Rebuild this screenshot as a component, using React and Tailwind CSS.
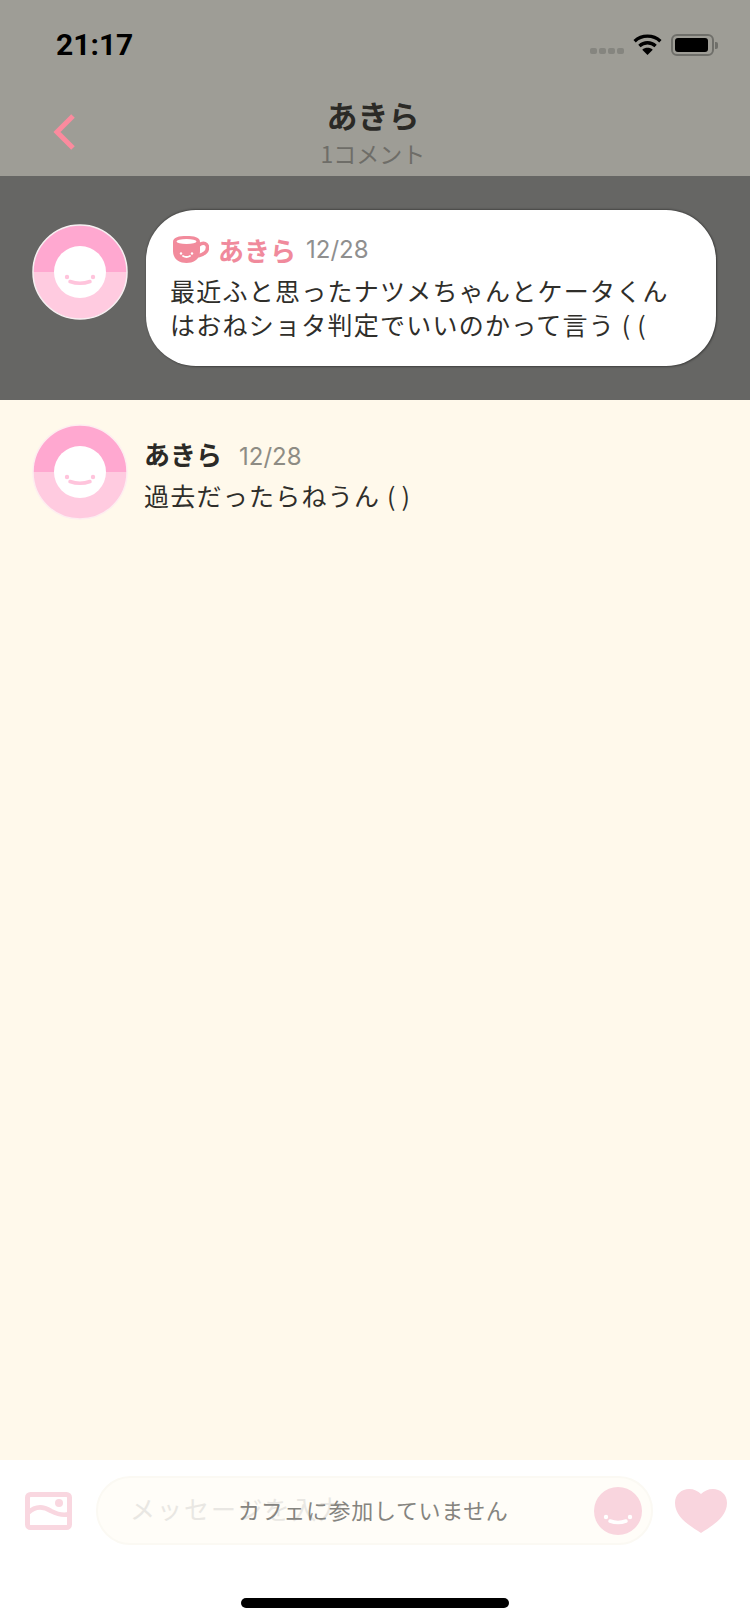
import React from 'react';

const fontStack = "[font-family:'Noto_Sans_CJK_JP','Noto_Sans',sans-serif]";

// pink avatar with the white smiling face
const Avatar = ({ ring = false }) => (
  <svg width="96" height="96" viewBox="0 0 96 96" className="shrink-0">
    <defs>
      <clipPath id={ring ? 'clipRing' : 'clipPlain'}>
        <circle cx="48" cy="48" r="47" />
      </clipPath>
    </defs>
    <g clipPath={`url(#${ring ? 'clipRing' : 'clipPlain'})`}>
      <rect x="0" y="0" width="96" height="48" fill="#ffa8d0" />
      <rect x="0" y="48" width="96" height="48" fill="#ffcbe0" />
    </g>
    <circle cx="48" cy="48" r="47" fill="none" stroke={ring ? '#f7f0f2' : '#fdeef0'} strokeWidth="1.5" />
    <circle cx="48" cy="48" r="26" fill="#ffffff" />
    <circle cx="35" cy="53" r="2.200" fill="#ffc4dc" />
    <circle cx="61" cy="53" r="2.200" fill="#ffc4dc" />
    <path d="M38 57.500 Q48 61 58 57.500" fill="none" stroke="#ffc4dc" strokeWidth="3.500" strokeLinecap="round" />
  </svg>
);

const CupIcon = () => (
  <svg width="36" height="28" viewBox="0 0 36 28" className="shrink-0">
    <path d="M0 6 C0 1 6 0 13.500 0 C21 0 27 1 27 6 L27 15 C27 23 21 27 13.500 27 C6 27 0 23 0 15 Z" fill="#f28b9c" />
    <ellipse cx="13.500" cy="5.500" rx="10" ry="2.600" fill="#ffffff" />
    <path d="M26 9 C31 5.500 34.500 8 34.500 11.500 C34.500 16 31 18.500 25 20" fill="none" stroke="#f28b9c" strokeWidth="3.500" />
    <circle cx="8" cy="17.500" r="1.200" fill="#ffffff" />
    <circle cx="19" cy="17.500" r="1.200" fill="#ffffff" />
    <path d="M10 20 Q13.500 22 17 20" fill="none" stroke="#ffffff" strokeWidth="1.800" strokeLinecap="round" />
  </svg>
);

const StatusIcons = () => (
  <div className="flex items-end gap-[9px]">
    <div className="mb-[2px] flex gap-[2px]">
      <span className="h-[6px] w-[7px] rounded-[2px] bg-[#85857f]" />
      <span className="h-[6px] w-[7px] rounded-[2px] bg-[#85857f]" />
      <span className="h-[6px] w-[7px] rounded-[2px] bg-[#85857f]" />
      <span className="h-[6px] w-[7px] rounded-[2px] bg-[#85857f]" />
    </div>
    <svg width="29" height="21" viewBox="0 0 30 22" className="mb-[1px]">
      <path d="M1.500 7.500 C9 0.500 21 0.500 28.500 7.500" fill="none" stroke="#000" strokeWidth="3.500" />
      <path d="M6.500 12.500 C11.500 8 18.500 8 23.500 12.500" fill="none" stroke="#000" strokeWidth="3.500" />
      <path d="M15 22 L9.500 16.500 C12.500 13.800 17.500 13.800 20.500 16.500 Z" fill="#000" />
    </svg>
    <div className="flex items-center gap-[1px]">
      <div className="h-[22px] w-[43px] rounded-[6px] border-2 border-[#6f6f6a] p-[2px]">
        <div className="h-full w-[33px] rounded-[3px] bg-black" />
      </div>
      <span className="h-[7px] w-[3px] rounded-r-[2px] bg-[#6f6f6a]" />
    </div>
  </div>
);

const App = () => {
  return (
    <div className={`relative flex h-[1624px] w-[750px] flex-col overflow-hidden bg-[#fff9eb] ${fontStack}`}>
      {/* dimmed header */}
      <header className="h-[176px] shrink-0 bg-[#9e9d96]">
        <div className="flex h-[88px] items-start justify-between pl-[56px] pr-[32px] pt-[27px]">
          <span className="text-[30px] leading-[36px] font-bold text-black [font-family:'Roboto',sans-serif]">21:17</span>
          <div className="pt-[7px]">
            <StatusIcons />
          </div>
        </div>
        <div className="grid grid-cols-[1fr_auto_1fr] pr-[4px]">
          <div className="pl-[51px] pt-[25px]">
            <svg width="25" height="38" viewBox="0 0 25 38">
              <path d="M22 3 L6 19 L22 35" fill="none" stroke="#fb8b9e" strokeWidth="5" />
            </svg>
          </div>
          <div className="flex flex-col items-center pt-[5px]">
            <span className="text-[31px] leading-[44px] font-bold text-[#2b2a26]">あきら</span>
            <span className="mt-[2px] text-[23px] leading-[28px] text-[#6e6d68]">1コメント</span>
          </div>
          <div />
        </div>
      </header>

      {/* highlighted parent comment */}
      <section className="flex h-[224px] shrink-0 items-start gap-[18px] bg-[#666664] pl-[32px] pt-[34px]">
        <div className="pt-[14px]">
          <Avatar ring />
        </div>
        <div className="h-[156px] w-[570px] rounded-[50px] bg-white pl-[24px] pt-[23px] shadow-[0_-1px_2px_rgba(0,0,0,0.3),1px_1px_2px_rgba(0,0,0,0.35)]">
          <div className="flex h-[34px] items-center pl-[3px]">
            <CupIcon />
            <span className="ml-[9px] text-[26px] leading-[34px] font-bold text-[#f08a9c]">あきら</span>
            <span className="ml-[10px] text-[24px] leading-[34px] text-[#8f8f8f] [font-family:'Inter',sans-serif]">12/28</span>
          </div>
          <p className="mt-[6px] text-[25px] leading-[34px] tracking-[1.25px] text-[#2f2e2a]">
            最近ふと思ったナツメちゃんとケータくん
            <br />
            はおねショタ判定でいいのかって言う <span className="tracking-[7px]">((</span>
          </p>
        </div>
      </section>

      {/* reply list */}
      <main className="flex-1 pl-[32px] pt-[24px]">
        <div className="flex gap-[16px]">
          <Avatar />
          <div className="pt-[12px]">
            <div className="flex items-baseline">
              <span className="text-[26px] leading-[36px] font-bold text-[#2b2a26]">あきら</span>
              <span className="ml-[17px] text-[24px] leading-[36px] text-[#8e8c84] [font-family:'Inter',sans-serif]">12/28</span>
            </div>
            <p className="mt-[2px] text-[25px] leading-[36px] tracking-[1.25px] text-[#2f2e2a]">
              過去だったらねうん <span className="tracking-[6px]">()</span>
            </p>
          </div>
        </div>
      </main>

      {/* disabled composer */}
      <footer className="relative h-[164px] shrink-0 bg-white">
        <div className="flex items-center pl-[25px] pt-[16px]">
          <svg width="47" height="38" viewBox="0 0 47 38" className="shrink-0">
            <rect x="2.500" y="2.500" width="42" height="33" rx="3" fill="none" stroke="#f9d7e0" strokeWidth="5" />
            <path d="M3 21 C10 14 18 14 26 19 C32 22 38 24 44 22" fill="none" stroke="#f9d7e0" strokeWidth="4.500" />
            <circle cx="34" cy="11" r="4" fill="#f9d7e0" />
          </svg>
          <div className="ml-[24px] flex h-[69px] w-[557px] items-center justify-between rounded-[35px] border-2 border-[#fbf9f3] bg-[#fffdf8] pl-[32px] pr-[9px]">
            <span className="-mt-[3px] text-[25px] tracking-[2px] text-[#e9e7e3]">メッセージを入力</span>
            <svg width="48" height="48" viewBox="0 0 48 48">
              <circle cx="24" cy="24" r="24" fill="#f9d5de" />
              <circle cx="12" cy="30" r="2.200" fill="#ffffff" />
              <circle cx="36" cy="30" r="2.200" fill="#ffffff" />
              <path d="M16 34 Q24 37 32 34" fill="none" stroke="#ffffff" strokeWidth="3.500" strokeLinecap="round" />
            </svg>
          </div>
          <svg width="54" height="44" viewBox="0 0 54 44" className="ml-[21px] shrink-0">
            <path d="M27 44 C18 38 1 29 1 14 C1 5 8 0 15 0 C20 0 24 2 27 5 C30 2 34 0 39 0 C46 0 53 5 53 14 C53 29 36 38 27 44 Z" fill="#f9d5de" />
          </svg>
        </div>
        {/* notice sits over the input */}
        <span className="absolute left-[238px] top-[32px] text-[22px] leading-[34px] tracking-[0.65px] text-[#85847f]">カフェに参加していません</span>
        <div className="mx-auto mt-[53px] h-[10px] w-[268px] rounded-full bg-black" />
      </footer>
    </div>
  );
};

export default App;
